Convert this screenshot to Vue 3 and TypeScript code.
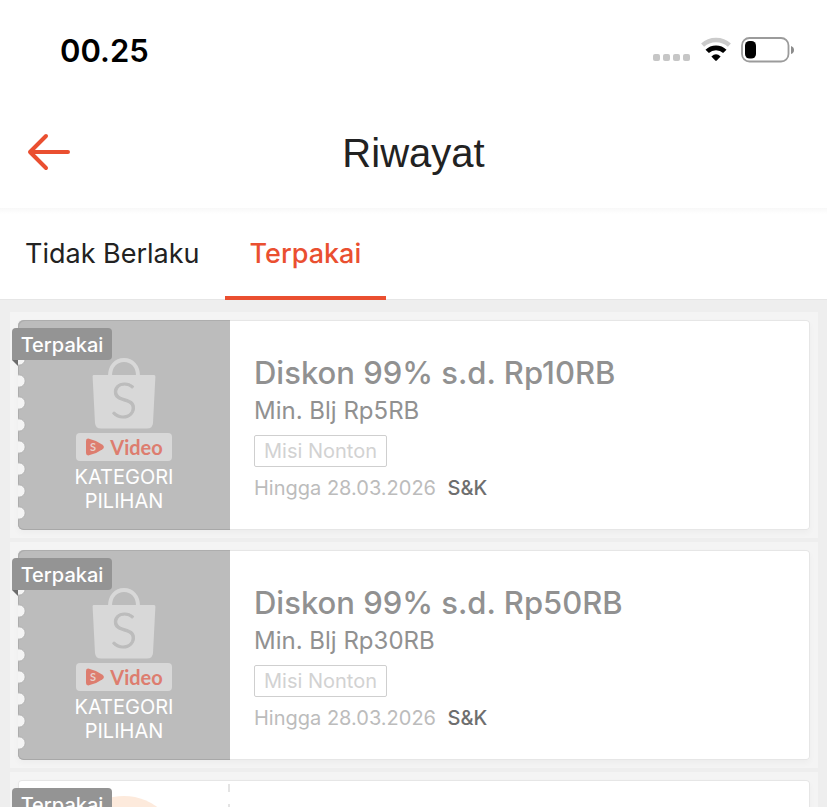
<script setup lang="ts">
import { ref } from 'vue'

interface Voucher {
  id: number
  kind: 'video' | 'food'
  title: string
  minimum: string
  tag: string
  expiry: string
}

const tabs: string[] = ['Tidak Berlaku', 'Terpakai']
const activeTab = ref<string>('Terpakai')

const vouchers: Voucher[] = [
  { id: 1, kind: 'video', title: 'Diskon 99% s.d. Rp10RB', minimum: 'Min. Blj Rp5RB', tag: 'Misi Nonton', expiry: 'Hingga 28.03.2026' },
  { id: 2, kind: 'video', title: 'Diskon 99% s.d. Rp50RB', minimum: 'Min. Blj Rp30RB', tag: 'Misi Nonton', expiry: 'Hingga 28.03.2026' },
  { id: 3, kind: 'food', title: '', minimum: '', tag: '', expiry: '' },
]

const notches: number[] = Array.from({ length: 9 }, (_, i) => 17 + i * 22)
</script>

<template>
  <div class="screen">
    <div class="status">
      <span class="clock">00.25</span>
      <div class="indicators">
        <svg class="signal" width="38" height="8" viewBox="0 0 38 8" aria-hidden="true">
          <rect v-for="n in 4" :key="n" :x="(n - 1) * 10" y="0" width="7" height="7" rx="2" fill="#c6c6c6" />
        </svg>
        <svg class="wifi" width="32" height="26" viewBox="0 0 32 26" aria-hidden="true">
          <path d="M2.6 8.2C10 1.2 22 1.2 29.4 8.2" fill="none" stroke="#cbcbcb" stroke-width="4.4" />
          <path d="M7.2 14.4C12 9.6 20 9.6 24.8 14.4" fill="none" stroke="#000" stroke-width="4.8" />
          <path d="M11.4 19.4Q16 15.2 20.6 19.4L16.800 23.400Q16 24.200 15.200 23.400Z" fill="#000" />
        </svg>
        <svg class="battery" width="54" height="26" viewBox="0 0 54 26" aria-hidden="true">
          <rect x="1" y="1" width="46.5" height="23.5" rx="7.5" fill="none" stroke="#9b9b9b" stroke-width="1.8" />
          <rect x="4" y="4" width="11" height="17.5" rx="4.6" fill="#000" />
          <path d="M50 9Q53 10 53 13T50 17Z" fill="#8c8c8c" />
        </svg>
      </div>
    </div>

    <header class="bar">
      <button class="back" type="button" aria-label="Kembali">
        <svg width="44" height="40" viewBox="0 0 44 40" aria-hidden="true">
          <path d="M20 4L4 20L20 36M4 20H42" fill="none" stroke="#ea4f30" stroke-width="4" stroke-linecap="round" stroke-linejoin="round" />
        </svg>
      </button>
      <h1>Riwayat</h1>
    </header>

    <nav class="tabs">
      <button
        v-for="tab in tabs"
        :key="tab"
        type="button"
        class="tab"
        :class="{ active: tab === activeTab }"
        @click="activeTab = tab"
      >{{ tab }}</button>
    </nav>

    <main class="list">
      <div v-for="v in vouchers" :key="v.id" class="slot">
        <article class="card">
          <span class="badge">Terpakai</span>

          <div v-if="v.kind === 'video'" class="side video">
            <svg class="notches" width="9" height="210" viewBox="0 0 9 210" aria-hidden="true">
              <circle v-for="y in notches" :key="y" cx="1" :cy="y" r="6.2" fill="#f4f4f4" stroke="#b0b0b0" stroke-width="1" />
            </svg>
            <svg class="bag" width="64" height="71" viewBox="0 0 64 71" aria-hidden="true">
              <path d="M18 18C18 8 24 2 32 2S46 8 46 18" fill="none" stroke="#d8d8d8" stroke-width="4" />
              <path d="M1.5 17H62Q63.500 17 63.400 18.500L61 65Q60.600 70.500 55 70.500H9Q3.400 70.500 3 65L.6 18.500Q.5 17 1.500 17Z" fill="#d8d8d8" />
              <text x="32" y="60" text-anchor="middle" class="bag-letter">S</text>
            </svg>
            <div class="brand">
              <svg width="20" height="18" viewBox="0 0 20 18" aria-hidden="true">
                <path d="M1 3Q1 .2 4 .7Q12 2.500 17.500 6.700Q20.300 9 17.500 11.300Q12 15.500 4 17.300Q1 17.800 1 15Z" fill="#dd7d6f" />
                <text x="8" y="13" text-anchor="middle" class="play-letter">S</text>
              </svg>
              <span>Video</span>
            </div>
            <p class="category">KATEGORI<br>PILIHAN</p>
          </div>
          <div v-else class="side food">
            <svg width="112" height="112" viewBox="0 0 112 112" aria-hidden="true">
              <circle cx="56" cy="56" r="56" fill="#fdeadc" />
            </svg>
          </div>

          <div v-if="v.title" class="info">
            <h2>{{ v.title }}</h2>
            <p class="minimum">{{ v.minimum }}</p>
            <span class="tag">{{ v.tag }}</span>
            <p class="expiry">{{ v.expiry }} <a href="#">S&amp;K</a></p>
          </div>
        </article>
      </div>
    </main>
  </div>
</template>

<style>
body {
  margin: 0;
  background: #eee;
}
</style>

<style scoped>
.screen {
  display: flex;
  flex-direction: column;
  height: 100vh;
  overflow: hidden;
  background: #eee;
  font-family: Inter, "Liberation Sans", sans-serif;
}
.screen * {
  box-sizing: border-box;
}
h1, h2, p {
  margin: 0;
  font-weight: 400;
}
button {
  padding: 0;
  border: 0;
  background: none;
  font: inherit;
  cursor: pointer;
}
.status {
  flex: none;
  display: flex;
  align-items: center;
  justify-content: space-between;
  height: 100px;
  padding: 0 32px 0 60px;
  background: #fff;
}
.clock {
  font-size: 31px;
  font-weight: 600;
  color: #000;
}
.indicators {
  display: flex;
  align-items: center;
  gap: 9px;
}
.signal {
  margin-top: 16px;
}
.bar {
  flex: none;
  display: grid;
  grid-template-columns: 44px 1fr 44px;
  align-items: center;
  height: 108px;
  padding: 0 26px;
  background: #fff;
}
.back {
  display: flex;
  margin-bottom: 4px;
}
h1 {
  margin-bottom: 2px;
  font-family: "Liberation Sans", Arial, sans-serif;
  font-size: 40px;
  line-height: 48px;
  text-align: center;
  color: #222;
}
.tabs {
  flex: none;
  display: flex;
  height: 92px;
  border-bottom: 1px solid #e6e6e6;
  background: linear-gradient(#f8f8f8, #fff 6px);
}
.tab {
  height: 92px;
  padding: 2px 25px 0;
  border-bottom: 4px solid transparent;
  font-size: 27px;
  color: #222;
}
.tab.active {
  border-bottom-color: #ea4f30;
  font-weight: 500;
  color: #ea4f30;
}
.list {
  flex: 1;
  display: flex;
  flex-direction: column;
  gap: 4px;
  padding: 12px 9px 0 10px;
}
.slot {
  flex: none;
  padding: 8px;
  background: #f4f4f4;
}
.card {
  position: relative;
  display: flex;
  height: 210px;
  border-radius: 4px;
  background: #fff;
  box-shadow: inset 0 0 0 1px #e6e6e6, 0 3px 6px rgba(0, 0, 0, 0.03);
}
.badge {
  position: absolute;
  z-index: 1;
  top: 8px;
  left: -6px;
  width: 100px;
  height: 32px;
  border-radius: 4px 4px 4px 0;
  background: #949494;
  font-size: 20px;
  font-weight: 500;
  line-height: 34px;
  text-align: center;
  color: #fff;
}
.badge::after {
  content: "";
  position: absolute;
  top: 32px;
  left: 0;
  border-top: 6px solid #6c6c6c;
  border-left: 6px solid transparent;
}
.side {
  position: relative;
  flex: none;
  display: flex;
  flex-direction: column;
  align-items: center;
  width: 212px;
  height: 210px;
}
.video {
  padding-top: 38px;
  border-radius: 6px 0 0 6px;
  background: #bcbcbc;
  box-shadow: inset 1px 1px 0 #adadad, inset 0 -1px 0 #a8a8a8;
}
.food {
  padding-top: 16px;
}
.food::after {
  content: "";
  position: absolute;
  top: 4px;
  right: 0;
  bottom: 4px;
  width: 2px;
  background: repeating-linear-gradient(#e4e4e4 0 8px, transparent 8px 20px);
}
.notches {
  position: absolute;
  top: 0;
  left: 0;
}
.bag-letter {
  font-family: Lato, sans-serif;
  font-size: 50px;
  font-weight: 300;
  fill: #bcbcbc;
  stroke: #bcbcbc;
  stroke-width: 1px;
}
.play-letter {
  font-family: Lato, sans-serif;
  font-size: 11px;
  font-weight: 700;
  fill: #e6d0cc;
}
.brand {
  display: flex;
  align-items: center;
  justify-content: center;
  gap: 5px;
  width: 96px;
  height: 28px;
  margin-top: 4px;
  border-radius: 4px;
  background: #d8d8d8;
  font-family: Lato, sans-serif;
  font-size: 20px;
  line-height: 26px;
  font-weight: 700;
  color: #dd7d6f;
}
.category {
  margin-top: 4px;
  font-size: 20px;
  line-height: 24px;
  text-align: center;
  color: #fff;
}
.info {
  flex: 1;
  display: flex;
  flex-direction: column;
  align-items: flex-start;
  min-width: 0;
  padding: 33px 24px 0;
}
h2 {
  font-size: 31px;
  font-weight: 500;
  line-height: 40px;
  color: #919191;
}
.minimum {
  margin-top: 4px;
  font-size: 24px;
  line-height: 28px;
  color: #919191;
}
.tag {
  height: 32px;
  margin-top: 10px;
  padding: 0 9px;
  border: 1px solid #cfcfcf;
  border-radius: 2px;
  font-size: 20px;
  line-height: 31px;
  color: #d2d2d2;
}
.expiry {
  margin-top: 9px;
  font-size: 20px;
  line-height: 24px;
  color: #bcbcbc;
}
.expiry a {
  margin-left: 6px;
  font-weight: 500;
  text-decoration: none;
  color: #6e6e6e;
}
</style>
